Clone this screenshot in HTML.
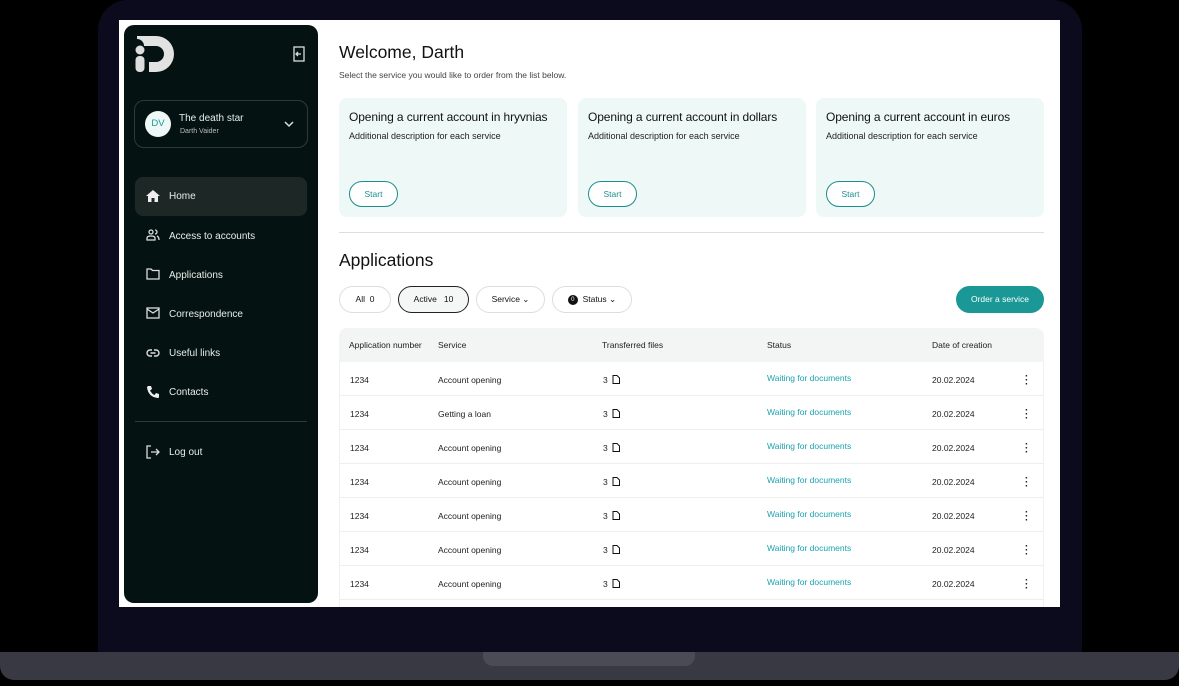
<!DOCTYPE html>
<html><head><meta charset="utf-8"><style>
*{margin:0;padding:0;box-sizing:border-box}
body{width:1179px;height:686px;background:#000;position:relative;overflow:hidden;font-family:"Liberation Sans",sans-serif;color:#111}
.a{position:absolute}
.frame{left:98px;top:0;width:984px;height:660px;background:#0c0b1e;border-radius:30px 30px 0 0}
.base{left:0;top:652px;width:1179px;height:28px;background:#393943;border-radius:0 0 14px 14px}
.notch{left:483px;top:652px;width:212px;height:14px;background:#4b4b55;border-radius:0 0 10px 10px}
.screen{left:119px;top:20px;width:941px;height:587px;background:#fff;overflow:hidden}
.side{left:124px;top:25px;width:194px;height:578px;background:#041311;border-radius:10px}
.nav{color:#e8ecea;font-size:10px}
.card{top:98px;width:228px;height:119px;background:#eef8f6;border-radius:8px}
.card h3{position:absolute;left:10px;top:12px;font-size:12px;font-weight:normal;color:#111;white-space:nowrap;letter-spacing:-0.1px}
.card p{position:absolute;left:10px;top:33px;font-size:9px;color:#222}
.card .b{position:absolute;left:10px;top:83px;width:49px;height:26px;border:1px solid #1a8f8c;border-radius:13px;font-size:8.5px;color:#1a8f8c;text-align:center;line-height:24px;background:#fff}
.pill{top:286px;height:27px;border:1px solid #ddd;border-radius:14px;font-size:8.5px;text-align:center;line-height:25px;color:#111}
.row{left:339px;width:705px;height:34px;border-bottom:1px solid #eee;font-size:8.5px;color:#222}
.row span{position:absolute;top:13px}
</style></head><body>
<div class="a frame"></div>
<div class="a base"></div>
<div class="a notch"></div>
<div class="a screen"></div>
<div class="a side"></div>
<!-- logo -->
<svg class="a" style="left:134px;top:35px" width="42" height="38" viewBox="0 0 42 38"><circle cx="6" cy="15" r="4.5" fill="#ddd"/><rect x="1.5" y="21" width="9" height="16" rx="4" fill="#ddd"/><path d="M3 1 H22 A18 18 0 0 1 22 37 H15 V27 H22 A8 8 0 0 0 22 11 H10 A7 7 0 0 0 3 4 Z" fill="#e2e2e2"/></svg>
<svg class="a" style="left:292px;top:46px" width="14" height="16" viewBox="0 0 14 16" fill="none" stroke="#ddd" stroke-width="1.3"><rect x="2" y="1" width="10" height="14"/><path d="M9 8H4M6 6L4 8L6 10"/></svg>
<div class="a" style="left:134px;top:100px;width:174px;height:48px;border:1px solid #2c3a38;border-radius:10px"></div>
<div class="a" style="left:145px;top:111px;width:26px;height:26px;border-radius:50%;background:#eef8f6;color:#1a9a96;font-size:9.5px;text-align:center;line-height:26px">DV</div>
<div class="a nav" style="left:179px;top:113px;font-size:10px">The death star</div>
<div class="a nav" style="left:180px;top:128px;font-size:7px;color:#bbb">Darth Vaider</div>
<svg class="a" style="left:284px;top:120px" width="10" height="8"><path d="M1 2L5 6L9 2" stroke="#ddd" stroke-width="1.5" fill="none"/></svg>
<div class="a" style="left:135px;top:177px;width:172px;height:39px;background:#1d2826;border-radius:8px"></div>
<svg class="a" style="left:146px;top:190px" width="14" height="12" viewBox="0 0 14 12"><path d="M7 0L0 6H2V12H5.5V8H8.5V12H12V6H14Z" fill="#eee"/></svg>
<div class="a nav" style="left:169px;top:191px">Home</div>
<div class="a nav" style="left:169px;top:231px">Access to accounts</div>
<svg class="a" style="left:146px;top:229px" width="14" height="12" fill="none" stroke="#ddd" stroke-width="1.3"><circle cx="5" cy="3" r="2"/><path d="M1 11V9Q1 7 5 7Q9 7 9 9V11ZM9 1A2 2 0 0 1 9 5M11 7Q13 8 13 11"/></svg>
<div class="a nav" style="left:169px;top:270px">Applications</div>
<svg class="a" style="left:146px;top:268px" width="14" height="12" fill="none" stroke="#ddd" stroke-width="1.3"><path d="M1 1H5L6.5 2.5H13V11H1Z"/></svg>
<div class="a nav" style="left:169px;top:309px">Correspondence</div>
<svg class="a" style="left:146px;top:307px" width="14" height="12" fill="none" stroke="#ddd" stroke-width="1.3"><rect x="1" y="1" width="12" height="10"/><path d="M1 2L7 6L13 2"/></svg>
<div class="a nav" style="left:169px;top:348px">Useful links</div>
<svg class="a" style="left:146px;top:348px" width="14" height="10" fill="none" stroke="#ddd" stroke-width="1.4"><path d="M6 2H4A3 3 0 0 0 4 8H6M8 2H10A3 3 0 0 1 10 8H8M4.5 5H9.5"/></svg>
<div class="a nav" style="left:169px;top:387px">Contacts</div>
<svg class="a" style="left:146px;top:385px" width="14" height="14"><path d="M2 1L5 1L6 4L4 5.5Q6 9 8.5 10L10 8L13 9V12Q13 13 12 13Q2 12 1 2Z" fill="#eee"/></svg>
<div class="a" style="left:135px;top:421px;width:172px;height:1px;background:#2c3a38"></div>
<div class="a nav" style="left:169px;top:447px">Log out</div>
<svg class="a" style="left:146px;top:445px" width="14" height="14" fill="none" stroke="#ddd" stroke-width="1.3"><path d="M5 1H1V13H5M5 7H13M10 4L13 7L10 10"/></svg>

<div class="a" style="left:339px;top:42px;font-size:17.5px;color:#111">Welcome, Darth</div>
<div class="a" style="left:339px;top:70px;font-size:8.5px;color:#444">Select the service you would like to order from the list below.</div>
<div class="a card" style="left:339px"><h3>Opening a current account in hryvnias</h3><p>Additional description for each service</p><div class="b">Start</div></div>
<div class="a card" style="left:578px"><h3>Opening a current account in dollars</h3><p>Additional description for each service</p><div class="b">Start</div></div>
<div class="a card" style="left:816px"><h3>Opening a current account in euros</h3><p>Additional description for each service</p><div class="b">Start</div></div>
<div class="a" style="left:339px;top:232px;width:705px;height:1px;background:#ddd"></div>
<div class="a" style="left:339px;top:250px;font-size:17.5px;color:#111">Applications</div>
<div class="a pill" style="left:339px;width:52px">All&nbsp;&nbsp;0</div>
<div class="a pill" style="left:398px;width:71px;border-color:#222;background:#f5f6f6">Active&nbsp;&nbsp;&nbsp;10</div>
<div class="a pill" style="left:476px;width:69px">Service ⌄</div>
<div class="a pill" style="left:552px;width:80px"><span style="display:inline-block;width:10px;height:10px;border-radius:50%;background:#111;color:#fff;font-size:6px;line-height:10px;vertical-align:middle">0</span>&nbsp; Status ⌄</div>
<div class="a" style="left:956px;top:286px;width:88px;height:27px;background:#1a9896;border-radius:14px;color:#fff;font-size:8.5px;text-align:center;line-height:27px">Order a service</div>
<div class="a" style="left:339px;top:328px;width:705px;height:34px;background:#f3f4f4;border-radius:8px 8px 0 0;font-size:8.5px;color:#222">
<span class="a" style="left:10px;top:12px">Application number</span><span class="a" style="left:99px;top:12px">Service</span><span class="a" style="left:263px;top:12px">Transferred files</span><span class="a" style="left:428px;top:12px">Status</span><span class="a" style="left:593px;top:12px">Date of creation</span></div>
<div class="a" style="left:339px;top:362px;width:705px;height:245px;border-left:1px solid #f0f0f0;border-right:1px solid #f0f0f0"></div>
<div id="rows"></div>
<script>
var s=["Account opening","Getting a loan","Account opening","Account opening","Account opening","Account opening","Account opening"],h="";
for(var i=0;i<7;i++){h+='<div class="a row" style="top:'+(362+i*34)+'px"><span style="left:11px">1234</span><span style="left:99px">'+s[i]+'</span><span style="left:264px">3 <svg width="8" height="9" style="vertical-align:-1px;margin-left:2px"><path d="M1 .5H5L7.5 3V8.5H1Z" fill="none" stroke="#111"/></svg></span><span style="left:428px;top:11px;color:#1aa3b0">Waiting for documents</span><span style="left:593px">20.02.2024</span><span style="left:686px;top:13px;font-weight:bold;font-size:10px;line-height:4px">·<br>·<br>·</span></div>'}
document.getElementById('rows').innerHTML=h;
</script>
<div class="a" style="left:119px;top:607px;width:941px;height:45px;background:#0c0b1e"></div>
</body></html>
